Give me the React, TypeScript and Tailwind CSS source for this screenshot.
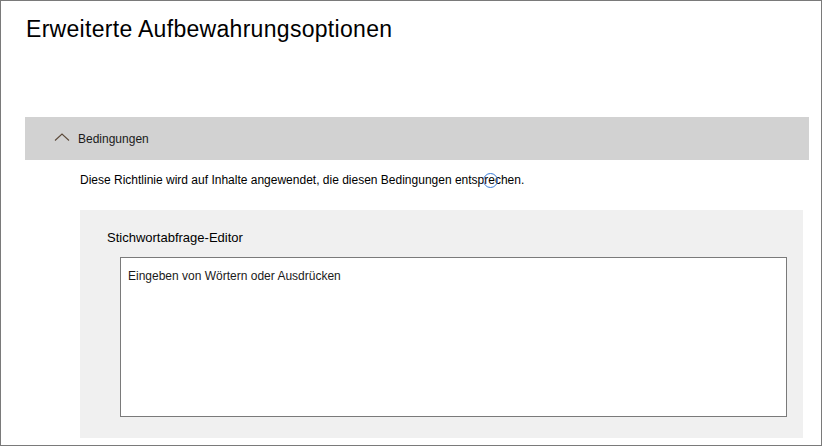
import React from "react";

export default function App() {
  return (
    <div className="w-[822px] h-[446px] overflow-hidden bg-white" style={{ fontFamily: '"Liberation Sans", Arial, sans-serif' }}>
      <div className="relative w-[822px] h-[446px] border border-[#7a7a7a] flex flex-col">
        <div className="pl-[25px] pt-[13px] h-[116px] text-[23px] leading-[30px] tracking-[0.3px] text-black">
          Erweiterte Aufbewahrungsoptionen
        </div>
        <div className="ml-[24px] mr-[12px] h-[43px] bg-[#d2d2d2] flex items-center pl-[29px] gap-[8px]">
          <svg width="16" height="8" viewBox="0 0 16 8" className="mb-[4px]">
            <path d="M1 7.5 L8 1 L15 7.5" fill="none" stroke="#5c4a3a" strokeWidth="1.1" />
          </svg>
          <span className="text-[12px] text-[#1a1a1a]">Bedingungen</span>
        </div>
        <div className="relative ml-[79px] mt-[12px] h-[16px] text-[12px] leading-[16px] text-black">
          Diese Richtlinie wird auf Inhalte angewendet, die diesen Bedingungen entsprechen.
          <span className="absolute left-[403px] top-[1px] w-[15px] h-[15px] rounded-full border border-[#3a7bd5]"></span>
        </div>
        <div className="ml-[79px] mr-[18px] mt-[22px] h-[228px] bg-[#f0f0f0] pt-[20px] pl-[27px] pr-[16px]">
          <div className="text-[13px] leading-[16px] text-black">Stichwortabfrage-Editor</div>
          <div className="mt-[11px] ml-[13px] h-[160px] bg-white border border-[#7a7a7a] pl-[7px] pt-[10px] text-[12px] leading-[16px] text-[#1a1a1a]">
            Eingeben von Wörtern oder Ausdrücken
          </div>
        </div>
      </div>
    </div>
  );
}
